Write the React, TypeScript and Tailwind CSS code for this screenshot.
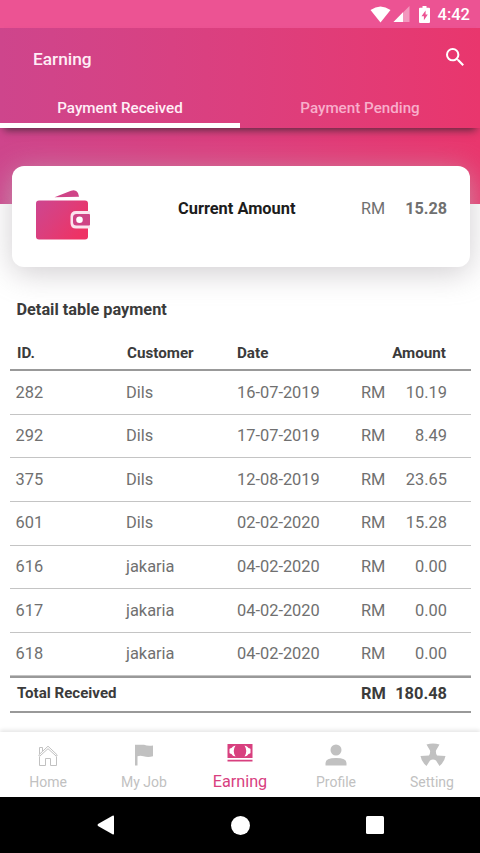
import type { ReactNode } from 'react';

type Payment = { id: string; customer: string; date: string; amount: string };

const payments: Payment[] = [
  { id: '282', customer: 'Dils', date: '16-07-2019', amount: '10.19' },
  { id: '292', customer: 'Dils', date: '17-07-2019', amount: '8.49' },
  { id: '375', customer: 'Dils', date: '12-08-2019', amount: '23.65' },
  { id: '601', customer: 'Dils', date: '02-02-2020', amount: '15.28' },
  { id: '616', customer: 'jakaria', date: '04-02-2020', amount: '0.00' },
  { id: '617', customer: 'jakaria', date: '04-02-2020', amount: '0.00' },
  { id: '618', customer: 'jakaria', date: '04-02-2020', amount: '0.00' },
];

function StatusBar() {
  return (
    <div className="flex h-7 shrink-0 items-center justify-end bg-[#ec5393] pr-[10px] text-white">
      <svg viewBox="0 0 21 17" className="h-[17px] w-[21px]" fill="currentColor">
        <path d="M0.500 4Q10.500 -3 20.500 4L10.500 16.500Z" />
      </svg>
      <svg viewBox="0 0 17 16" className="ml-[2px] h-4 w-[17px]" fill="currentColor">
        <path d="M16.500 0V16H0.500Z" opacity="0.4" />
        <path d="M10 6.300V16H0.500Z" />
      </svg>
      <svg viewBox="0 0 11 17" className="mr-[8px] ml-[9px] h-[17px] w-[11px]">
        <path
          fill="currentColor"
          fillRule="evenodd"
          d="M3.500 0H7.500V1.700H10Q11 1.700 11 2.700V16Q11 17 10 17H1Q0 17 0 16V2.700Q0 1.700 1 1.700H3.500ZM6.600 4.500L2.500 10.200H4.900V14.200L8.800 8.500H6.600Z"
        />
      </svg>
      <span className="pt-0.5 text-[16.500px] leading-none font-medium">4:42</span>
    </div>
  );
}

function Header() {
  return (
    <header className="relative z-10 h-[100px] shrink-0 bg-linear-to-r from-[#ce458c] via-[#dc3f7e] to-[#e9366d] text-white shadow-[0_6px_8px_-4px_rgba(50,35,45,0.8)]">
      <div className="flex h-[60px] items-center justify-between pr-4 pl-[33px]">
        <h1 className="pt-1 text-[17.300px] font-medium text-[#ffeef6]">Earning</h1>
        <svg viewBox="3 3 17.500 17.500" className="mb-[3px] h-[18px] w-[18px]" fill="currentColor">
          <path d="M15.500 14h-.79l-.28-.27A6.471 6.471 0 0 0 16 9.500 6.500 6.500 0 1 0 9.500 16c1.610 0 3.090-.59 4.230-1.570l.27.28v.79l5 4.990L20.490 19l-4.990-5zm-6 0C7.010 14 5 11.990 5 9.500S7.010 5 9.500 5 14 7.010 14 9.500 11.990 14 9.500 14z" />
        </svg>
      </div>
      <div className="grid h-10 grid-cols-2 text-center text-[15.200px] font-medium">
        <div className="h-10 border-b-[5px] border-white pt-[5px] leading-[30px] text-[#ffeef6]">Payment Received</div>
        <div className="pt-[5px] leading-[30px] text-[#f8aecb]">Payment Pending</div>
      </div>
    </header>
  );
}

function WalletIcon() {
  return (
    <svg viewBox="0 0 55 52" className="h-[52px] w-[55px]">
      <defs>
        <linearGradient id="wallet" x1="0" y1="0" x2="1" y2="0.6">
          <stop offset="0" stopColor="#cd4690" />
          <stop offset="0.5" stopColor="#dc3e7c" />
          <stop offset="1" stopColor="#ee3365" />
        </linearGradient>
      </defs>
      <path d="M18.500 7.200L35 0.800Q40 -0.800 42 3L43 6.800Z" fill="#cf4487" />
      <rect x="0" y="10.500" width="52" height="39" rx="3" fill="url(#wallet)" />
      <path d="M54 21H40Q34.500 21 34.500 26.500V33Q34.500 38.500 40 38.500H54Z" fill="#fce3ee" />
      <path d="M53 24H40.500Q37 24 37 27.500V32Q37 35.500 40.500 35.500H53Q54 35.500 54 34.500V25Q54 24 53 24Z" fill="#cf4385" />
      <circle cx="43.500" cy="29.800" r="3.300" fill="#fff" />
    </svg>
  );
}

function BalanceCard() {
  return (
    <section className="flex h-[101px] rounded-[12px] bg-white pl-6 shadow-[0_6px_30px_rgba(190,185,190,0.7)]">
      <div className="w-[142px] pt-6">
        <WalletIcon />
      </div>
      <div className="w-[183px] pt-[31px] text-[16.400px] leading-6 font-bold text-[#1c1c1c]">Current Amount</div>
      <div className="flex w-[86px] justify-between pt-[31px] text-[16.200px] leading-6 text-[#707070]">
        <span>RM</span>
        <span className="font-bold">15.28</span>
      </div>
    </section>
  );
}

function PaymentTable() {
  return (
    <section className="pr-[9px] pl-[10px] text-[#3b3b3b]">
      <h2 className="pt-[32px] pl-[6.500px] text-[16.300px] leading-6 font-bold">Detail table payment</h2>
      <div className="mt-[13px] flex h-[36px] border-b-2 border-[#999] pt-[8px] pl-[7px] text-[15.200px] leading-5 font-bold">
        <div className="w-[110px]">ID.</div>
        <div className="w-[110px]">Customer</div>
        <div className="w-[100px]">Date</div>
        <div className="w-[109px] text-right">Amount</div>
      </div>
      {payments.map((p) => (
        <div
          key={p.id}
          className="flex h-[43.650px] items-center border-b-[1.500px] border-[#c4c4c4] pt-px pl-[5.500px] text-[16.400px] text-[#707070]"
        >
          <div className="w-[110.500px]">{p.id}</div>
          <div className="w-[111px]">{p.customer}</div>
          <div className="w-[124px]">{p.date}</div>
          <div className="flex w-[86px] justify-between">
            <span>RM</span>
            <span>{p.amount}</span>
          </div>
        </div>
      ))}
      <div className="-mt-[0.500px] flex h-[37px] border-y-2 border-[#999] pl-[7px] text-[15.100px] leading-[31px] font-bold">
        <div className="w-[344px]">Total Received</div>
        <div className="flex w-[86px] justify-between text-[16.400px]">
          <span>RM</span>
          <span>180.48</span>
        </div>
      </div>
    </section>
  );
}

function NavItem({ label, active, children }: { label: string; active?: boolean; children: ReactNode }) {
  return (
    <div className={active ? 'flex flex-col items-center text-[#d8407f]' : 'flex flex-col items-center text-[#c1c1c1]'}>
      <div className="mt-[10px] flex h-[27px] items-center">{children}</div>
      <span className={active ? 'text-[16.200px] leading-[26px]' : 'text-[14px] leading-[26px]'}>{label}</span>
    </div>
  );
}

function BottomNav() {
  return (
    <nav className="grid h-[65px] shrink-0 grid-cols-5 bg-white shadow-[0_-2px_4px_rgba(0,0,0,0.1)]">
      <NavItem label="Home">
        <svg viewBox="0 0 20 22" className="h-[22px] w-5" fill="none" stroke="currentColor" strokeWidth="1">
          <path d="M0.700 10L10 1.200L19.300 10L18.300 11.200L10 3.700L1.700 11.200ZM1.500 9V2.500H4.500V6M1.500 11.500V20.500H7.500V13.500H12.500V20.500H18.500V11.500" />
        </svg>
      </NavItem>
      <NavItem label="My Job">
        <svg viewBox="0 0 18 22" className="mb-px h-[22px] w-[18px]" fill="currentColor">
          <path d="M0 0.800H9Q13 2.400 18 1.500V12.300Q13 13.500 8.500 12.200Q5 11.500 2.500 12.300V21.500H0Z" />
        </svg>
      </NavItem>
      <NavItem label="Earning" active>
        <svg viewBox="0 0 26 18" className="mb-[5px] h-[18px] w-[26px]">
          <path d="M0.500 0H25.500V14H0.500ZM0.500 15.800H25.500V17.600H0.500Z" fill="currentColor" />
          <path d="M8.500 1.500Q5.500 2 4.500 4Q2.500 4.500 2.500 5V9Q2.500 9.500 4.500 10Q5.500 12 8.500 12.500Q5 7 8.500 1.500ZM17.500 1.500Q20.500 2 21.500 4Q23.500 4.500 23.500 5V9Q23.500 9.500 21.500 10Q20.500 12 17.500 12.500Q21 7 17.500 1.500Z" fill="#fff" />
        </svg>
      </NavItem>
      <NavItem label="Profile">
        <svg viewBox="0 0 22 22" className="mb-px h-[22px] w-[22px]" fill="currentColor">
          <circle cx="11" cy="6" r="5.500" />
          <path d="M0.500 21.500V19Q0.500 14 11 14T21.500 19V21.500Z" />
        </svg>
      </NavItem>
      <NavItem label="Setting">
        <svg viewBox="0 0 26 24" className="mb-px ml-px h-6 w-[26px]" fill="currentColor">
          <path d="M6.500 1.500Q13 -0.500 19.500 1.500L16 7.500Q15.500 10 17 12.500L25.500 13Q24.500 19 19.500 23L16 17.500Q13 15.500 10 17.500L6.500 23Q1.500 19 0.500 13L9 12.500Q10.500 10 10 7.500Z" />
        </svg>
      </NavItem>
    </nav>
  );
}

function SystemNav() {
  return (
    <div className="flex h-14 shrink-0 items-center justify-center gap-[116px] bg-black">
      <svg viewBox="0 0 18 20" className="h-5 w-[18px]" fill="#fff">
        <path d="M1 9L15.500 0.700Q17 0 17 1.500V18.500Q17 20 15.500 19.300L1 11Q0 10 1 9Z" />
      </svg>
      <div className="h-[19px] w-[19px] rounded-full bg-white" />
      <div className="h-[18px] w-[18px] rounded-[1.500px] bg-white" />
    </div>
  );
}

export default function App() {
  return (
    <div className="flex h-[853px] w-[480px] flex-col overflow-hidden bg-white font-[Roboto,sans-serif]">
      <StatusBar />
      <Header />
      <div className="h-[76px] shrink-0 bg-linear-to-r from-[#ce458c] via-[#dc3f7e] to-[#e9366d] pt-[38px] pr-[10px] pl-3">
        <BalanceCard />
      </div>
      <main className="min-h-0 flex-1 pt-[62px]">
        <PaymentTable />
      </main>
      <BottomNav />
      <SystemNav />
    </div>
  );
}
